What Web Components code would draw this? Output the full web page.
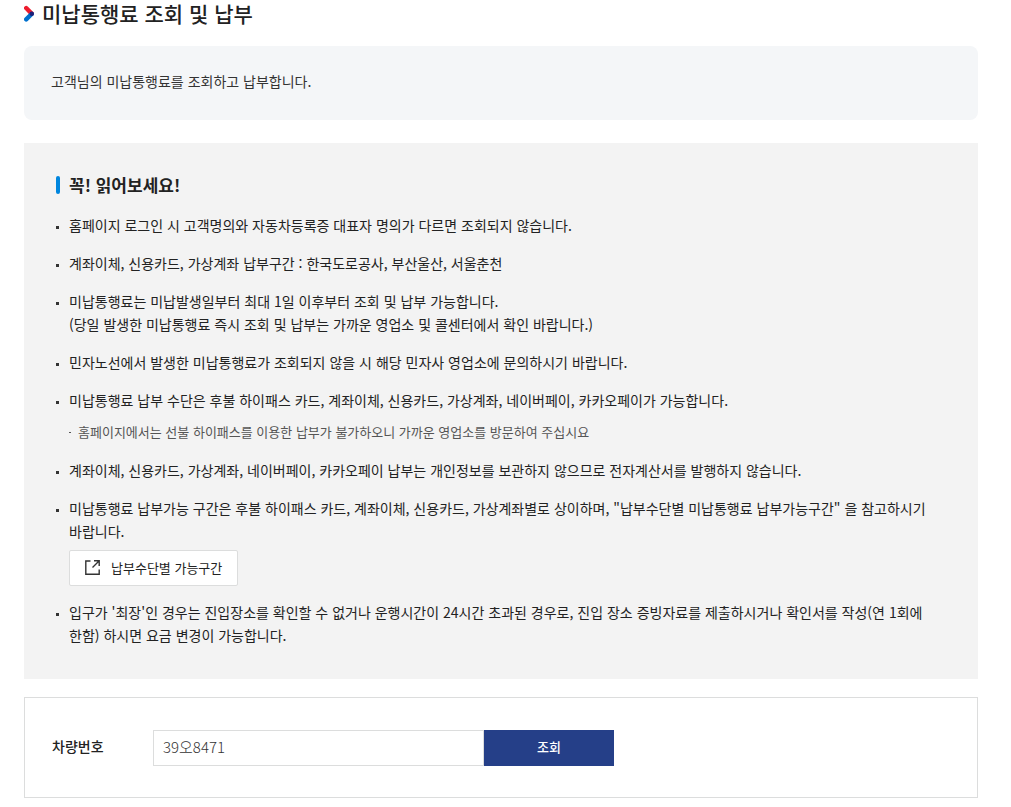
<!DOCTYPE html>
<html lang="ko">
<head>
<meta charset="utf-8">
<meta name="viewport" content="width=device-width, initial-scale=1">
<title>미납통행료 조회 및 납부</title>
<style>
  body {
    --line: #dcdddd;
    --navy: #253f88;
    --blue: #0086de;
    margin: 0;
    padding: 0 33px 9px 24px;
    background: #fff;
    color: #222;
    font: 14px/23px "Noto Sans CJK KR", sans-serif;
    word-break: keep-all;
  }
</style>
</head>
<body>
<toll-page>
  <page-title slot="title">미납통행료 조회 및 납부</page-title>
  <info-box>고객님의 미납통행료를 조회하고 납부합니다.</info-box>
  <notice-panel heading="꼭! 읽어보세요!">
    <notice-item>홈페이지 로그인 시 고객명의와 자동차등록증 대표자 명의가 다르면 조회되지 않습니다.</notice-item>
    <notice-item>계좌이체, 신용카드, 가상계좌 납부구간 : 한국도로공사, 부산울산, 서울춘천</notice-item>
    <notice-item>미납통행료는 미납발생일부터 최대 1일 이후부터 조회 및 납부 가능합니다.<br>(당일 발생한 미납통행료 즉시 조회 및 납부는 가까운 영업소 및 콜센터에서 확인 바랍니다.)</notice-item>
    <notice-item>민자노선에서 발생한 미납통행료가 조회되지 않을 시 해당 민자사 영업소에 문의하시기 바랍니다.</notice-item>
    <notice-item>미납통행료 납부 수단은 후불 하이패스 카드, 계좌이체, 신용카드, 가상계좌, 네이버페이, 카카오페이가 가능합니다.<sub-note slot="extra">홈페이지에서는 선불 하이패스를 이용한 납부가 불가하오니 가까운 영업소를 방문하여 주십시요</sub-note></notice-item>
    <notice-item>계좌이체, 신용카드, 가상계좌, 네이버페이, 카카오페이 납부는 개인정보를 보관하지 않으므로 전자계산서를 발행하지 않습니다.</notice-item>
    <notice-item>미납통행료 납부가능 구간은 후불 하이패스 카드, 계좌이체, 신용카드, 가상계좌별로 상이하며, "납부수단별 미납통행료 납부가능구간" 을 참고하시기 바랍니다.<popup-button slot="extra">납부수단별 가능구간</popup-button></notice-item>
    <notice-item>입구가 '최장'인 경우는 진입장소를 확인할 수 없거나 운행시간이 24시간 초과된 경우로, 진입 장소 증빙자료를 제출하시거나 확인서를 작성(연 1회에 한함) 하시면 요금 변경이 가능합니다.</notice-item>
  </notice-panel>
  <plate-search label="차량번호" value="39오8471">조회</plate-search>
</toll-page>

<script>
/** Attaches an open shadow root with the given styles and markup */
class BaseElement extends HTMLElement {
  constructor() {
    super();
    this.root = this.attachShadow({ mode: 'open' });
  }

  connectedCallback() {
    this.root.innerHTML = `
      <style>
        :host { display: block; }
        * { box-sizing: border-box; }
        ${this.styles}
      </style>
      ${this.markup}
    `;
  }
}

customElements.define('toll-page', class extends BaseElement {
  get styles() {
    return `
      main { display: flow-root; }
      ::slotted(info-box) { margin: 20px 0 23px; }
      ::slotted(plate-search) { margin-top: 18px; }
    `;
  }
  get markup() {
    return '<main><slot name="title"></slot><slot></slot></main>';
  }
});

customElements.define('page-title', class extends BaseElement {
  get styles() {
    return `
      h1 {
        display: flex;
        align-items: center;
        gap: 8px;
        margin: 0;
        font-size: 21px;
        font-weight: 500;
        line-height: 26px;
      }
      svg { flex: none; }
    `;
  }
  get markup() {
    return `
      <h1>
        <svg width="10" height="18" viewBox="0 0 10 18" fill="none" stroke-width="4.4" stroke-linecap="round" aria-hidden="true">
          <path d="M2.2 4 7.6 9.6" stroke="#ee1c2e"/>
          <path d="M2.2 15.4 7.6 10" stroke="#0071ce"/>
          <circle cx="7.8" cy="9.8" r="2.2" fill="#1d2078"/>
        </svg>
        <slot></slot>
      </h1>
    `;
  }
});

customElements.define('info-box', class extends BaseElement {
  get styles() {
    return `
      p {
        margin: 0;
        padding: 24px 27px 27px;
        border-radius: 8px;
        background: #f4f6f8;
        color: #333;
      }
    `;
  }
  get markup() {
    return '<p><slot></slot></p>';
  }
});

customElements.define('notice-panel', class extends BaseElement {
  get styles() {
    return `
      section {
        padding: 30px 32px 32px;
        background: #f3f3f3;
      }
      h2 {
        display: flex;
        align-items: center;
        gap: 9px;
        margin: 0 0 17px;
        font-size: 17px;
        font-weight: 700;
        line-height: 24px;
      }
      h2::before {
        content: "";
        width: 4px;
        height: 18px;
        border-radius: 2px;
        background: var(--blue);
      }
      div {
        display: grid;
        gap: 15px;
      }
    `;
  }
  get markup() {
    return `
      <section>
        <h2>${this.getAttribute('heading')}</h2>
        <div role="list"><slot></slot></div>
      </section>
    `;
  }
});

customElements.define('notice-item', class extends BaseElement {
  connectedCallback() {
    super.connectedCallback();
    this.setAttribute('role', 'listitem');
  }
  get styles() {
    return `
      :host {
        display: grid;
        grid-template-columns: 3px 1fr;
        column-gap: 10px;
      }
      i {
        width: 3px;
        height: 3px;
        margin-top: 12px;
        background: #333;
      }
      p { margin: 0; }
      ::slotted(sub-note) { margin: 8px 0 1px; }
      ::slotted(popup-button) { margin-top: 7px; }
    `;
  }
  get markup() {
    return '<i></i><div><p><slot></slot></p><slot name="extra"></slot></div>';
  }
});

customElements.define('sub-note', class extends BaseElement {
  get styles() {
    return `
      :host {
        display: flex;
        gap: 7px;
        color: #555;
        font-size: 13px;
      }
      i {
        flex: none;
        width: 2px;
        height: 1px;
        margin-top: 12px;
        background: #555;
      }
    `;
  }
  get markup() {
    return '<i></i><span><slot></slot></span>';
  }
});

customElements.define('popup-button', class extends BaseElement {
  get styles() {
    return `
      button {
        display: flex;
        align-items: center;
        gap: 11px;
        height: 36px;
        padding: 0 15px 2px;
        border: 1px solid var(--line);
        border-radius: 2px;
        background: #fff;
        color: #222;
        font: inherit;
        font-size: 13px;
        cursor: pointer;
      }
    `;
  }
  get markup() {
    return `
      <button type="button">
        <svg width="15" height="15" viewBox="0 0 15 15" fill="none" stroke="#333" stroke-width="1.4" aria-hidden="true">
          <path d="M5.5 1H.8v13.3h13.4V9.5"/>
          <path d="M7.5 7.5 14 1M9 .8h5.2V6"/>
        </svg>
        <slot></slot>
      </button>
    `;
  }
});

customElements.define('plate-search', class extends BaseElement {
  get styles() {
    return `
      form {
        display: grid;
        grid-template-columns: 101px minmax(0, 331px) 130px;
        align-items: center;
        padding: 32px 27px 31px;
        border: 1px solid var(--line);
      }
      label {
        padding-bottom: 3px;
        font-weight: 500;
      }
      input, button {
        width: 100%;
        height: 36px;
        margin: 0;
        border-radius: 0;
        font: inherit;
      }
      input {
        padding: 0 9px 3px;
        border: 1px solid var(--line);
        background: #fff;
        color: #333;
        font-size: 15px;
        font-weight: 300;
      }
      button {
        padding: 0 0 3px;
        border: 0;
        background: var(--navy);
        color: #fff;
        font-size: 13px;
        font-weight: 500;
        cursor: pointer;
      }
    `;
  }
  get markup() {
    return `
      <form>
        <label for="plate">${this.getAttribute('label')}</label>
        <input id="plate" type="text" value="${this.getAttribute('value')}">
        <button type="button"><slot></slot></button>
      </form>
    `;
  }
});
</script>
</body>
</html>
